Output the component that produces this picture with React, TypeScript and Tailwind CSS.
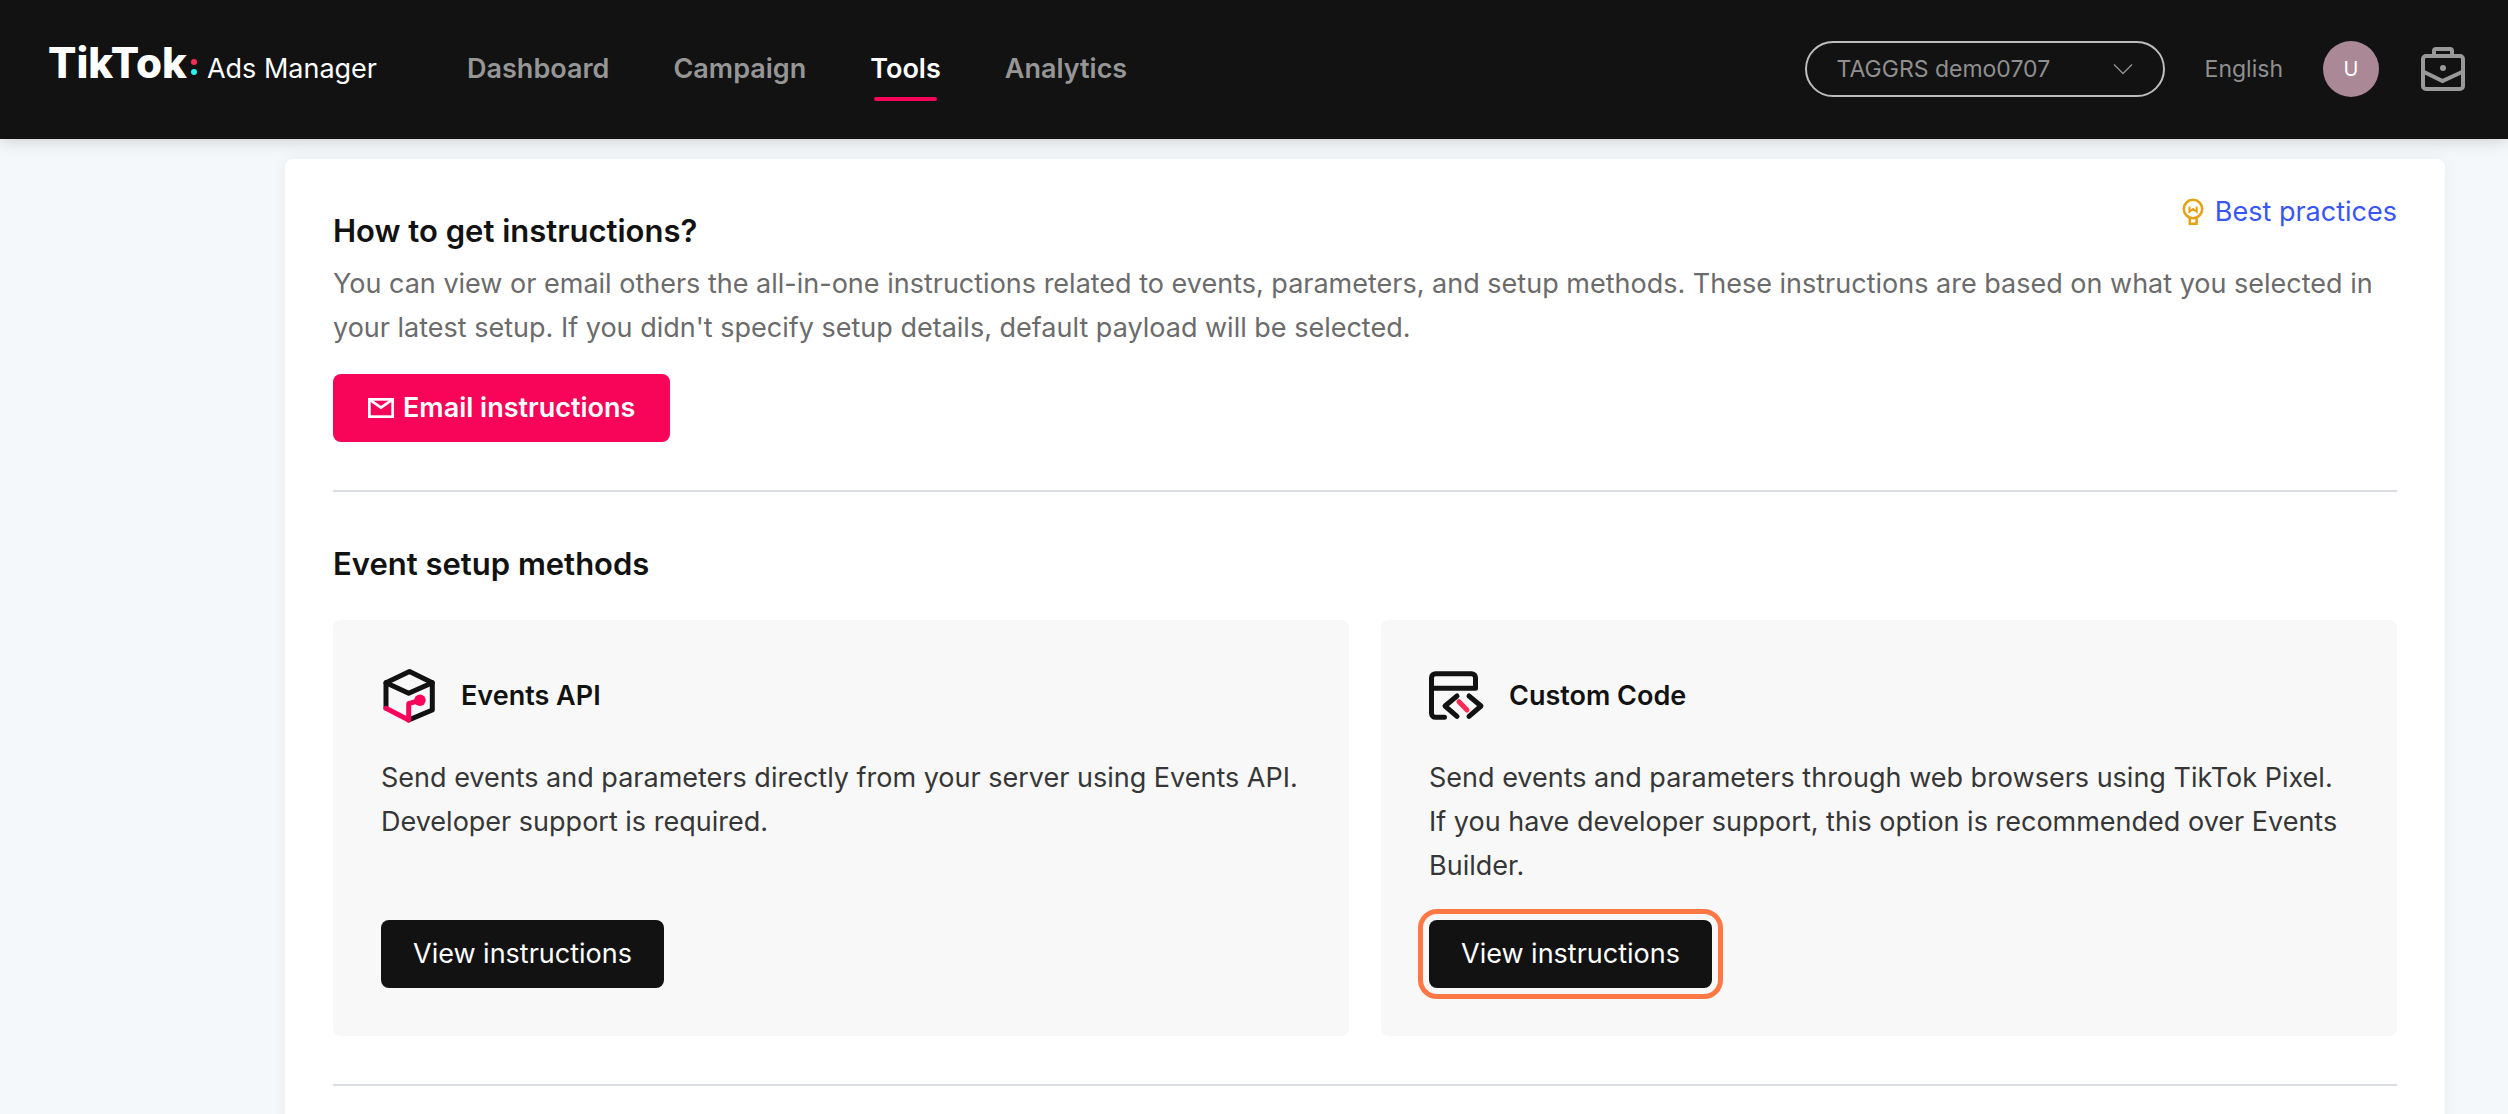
import { useState } from 'react'

const NAV_ITEMS = ['Dashboard', 'Campaign', 'Tools', 'Analytics']

function BriefcaseIcon() {
  return (
    <svg className="size-12" viewBox="0 0 48 48" fill="none" stroke="currentColor" strokeWidth="4" aria-hidden="true">
      <rect x="4" y="11" width="40" height="33" rx="3" />
      <path d="M15 11V6a2 2 0 0 1 2-2h14a2 2 0 0 1 2 2v5" />
      <path d="M5 27l18.500 9L43 27" />
      <circle cx="24" cy="23" r="3" fill="currentColor" stroke="none" />
    </svg>
  )
}

function BulbIcon() {
  return (
    <svg className="h-7 w-[26px]" viewBox="0 0 26 28" fill="none" stroke="#e6a014" strokeWidth="2.500" aria-hidden="true">
      <circle cx="13" cy="11" r="9.200" />
      <path d="M9.800 19.500v6.300h6.800v-6.300" />
      <path d="M9.500 8.500v5.200l3.600-2.700 3.600 2.700V8.500" strokeWidth="2" />
    </svg>
  )
}

function MailIcon() {
  return (
    <svg className="h-5 w-[26px]" viewBox="0 0 26 20" fill="none" stroke="currentColor" strokeWidth="2.700" aria-hidden="true">
      <rect x="1.350" y="1.350" width="23.300" height="17.300" />
      <path d="M2 1.800l11 7.800 11-7.800" />
    </svg>
  )
}

function CubeIcon() {
  return (
    <svg className="size-14" viewBox="0 0 56 56" fill="none" strokeWidth="5" strokeLinecap="round" strokeLinejoin="round" aria-hidden="true">
      <path d="M5 40V14.700L28.500 3.600l22.800 11.100V42L27.700 52" stroke="#121212" />
      <path d="M5 14.700l22.700 10.600 23.600-10.600" stroke="#121212" />
      <path d="M5 40.300L27.700 52V35.700L39 32.300" stroke="#f80459" />
      <circle cx="39" cy="32.300" r="5.700" fill="#f80459" />
    </svg>
  )
}

function CodeIcon() {
  return (
    <svg className="size-14" viewBox="0 0 56 56" fill="none" strokeWidth="5" strokeLinecap="round" strokeLinejoin="round" aria-hidden="true">
      <path d="M15.500 49.300h-9a4 4 0 0 1-4-4V9.700a4 4 0 0 1 4-4h36a4 4 0 0 1 4 4v10.600h-44" stroke="#121212" />
      <path d="M28 28L16 38l12 10.300M40 28l12 10-12 10.300" stroke="#121212" />
      <path d="M30 33.700l8 8.300" stroke="#fe2c55" />
    </svg>
  )
}

const METHODS = [
  {
    title: 'Events API',
    icon: <CubeIcon />,
    description: 'Send events and parameters directly from your server using Events API. Developer support is required.',
    highlighted: false,
  },
  {
    title: 'Custom Code',
    icon: <CodeIcon />,
    description:
      'Send events and parameters through web browsers using TikTok Pixel. If you have developer support, this option is recommended over Events Builder.',
    highlighted: true,
  },
]

function Header() {
  const [active, setActive] = useState('Tools')

  return (
    <header className="relative z-10 flex h-[139px] items-center bg-[#121212] pr-[41px] pb-px pl-12 shadow-[0_2px_16px_rgba(0,0,0,0.16)]">
      <a href="#" className="flex items-baseline pb-3 text-white">
        <span className="text-[42px] leading-[56px] font-extrabold">TikTok</span>
        <span className="mb-4 ml-1 flex flex-col gap-1 self-end">
          <span className="size-1.5 rounded-full bg-[#fe2c55]" />
          <span className="size-1.5 rounded-full bg-[#25f4ee]" />
        </span>
        <span className="ml-2.5">Ads Manager</span>
      </a>

      <nav className="ml-[90px] flex gap-16 leading-[56px] font-semibold">
        {NAV_ITEMS.map((item) => (
          <a
            key={item}
            href="#"
            onClick={() => setActive(item)}
            className={`relative ${item === active ? 'text-white' : 'text-[#969696]'}`}
          >
            {item}
            {item === active && (
              <span className="absolute inset-x-1 -bottom-1 h-1 rounded-sm bg-[#f80459]" />
            )}
          </a>
        ))}
      </nav>

      <div className="ml-auto flex items-center gap-10 text-[23px] text-[#8f8f8f]">
        <div className="relative">
          <select
            aria-label="Account"
            className="h-14 w-[360px] appearance-none rounded-full border-2 border-[#bdbdbd] bg-transparent pl-[30px]"
          >
            <option>TAGGRS demo0707</option>
          </select>
          <svg
            className="pointer-events-none absolute top-[22px] right-8 h-3 w-5"
            viewBox="0 0 20 12"
            fill="none"
            stroke="currentColor"
            strokeWidth="1.500"
            aria-hidden="true"
          >
            <path d="M1 1.500l9 9 9-9" />
          </svg>
        </div>
        <button>English</button>
        <button className="flex size-14 items-center justify-center rounded-full bg-[#aa8895] text-[20px] text-white">U</button>
        <button aria-label="Business center" className="text-[#999999]">
          <BriefcaseIcon />
        </button>
      </div>
    </header>
  )
}

export default function App() {
  return (
    <div className="min-h-screen bg-[#f4f8fb] font-['Inter',sans-serif] text-[27px] leading-[44px] text-[#121212]">
      <Header />
      <main className="pt-5 pr-[63px] pl-[285px]">
        <div className="rounded-lg bg-white px-12 pt-9 pb-12 shadow-[0_0_16px_rgba(0,0,0,0.05)]">
          <section>
            <div className="flex items-start justify-between">
              <h2 className="mt-3 text-[31px] leading-[47px] font-semibold">How to get instructions?</h2>
              <a href="#" className="flex items-center gap-[9px] leading-[34px] text-[#3955f6]">
                <BulbIcon />
                Best practices
              </a>
            </div>
            <p className="mt-2 text-[#6b6b6b]">
              You can view or email others the all-in-one instructions related to events, parameters, and setup methods.
              These instructions are based on what you selected in your latest setup. If you didn't specify setup
              details, default payload will be selected.
            </p>
            <button className="mt-6 flex h-[68px] items-center gap-[9px] rounded-lg bg-[#f80459] px-[35px] font-semibold text-white">
              <MailIcon />
              Email instructions
            </button>
          </section>

          <hr className="my-12 border-t-2 border-[#dadde2]" />

          <section>
            <h2 className="text-[31px] leading-[48px] font-semibold">Event setup methods</h2>
            <div className="mt-8 grid grid-cols-2 gap-8">
              {METHODS.map((method) => (
                <article key={method.title} className="flex flex-col items-start rounded-lg bg-[#f8f8f8] p-12">
                  <div className="flex items-center gap-6">
                    {method.icon}
                    <h3 className="font-semibold">{method.title}</h3>
                  </div>
                  <p className="mt-8 mb-8 text-[#363636]">{method.description}</p>
                  <button
                    className={`mt-auto h-[68px] rounded-lg bg-[#121212] px-8 text-white ${
                      method.highlighted ? 'outline-[5px] outline-offset-[6px] outline-[#ff7744]' : ''
                    }`}
                  >
                    View instructions
                  </button>
                </article>
              ))}
            </div>
          </section>

          <hr className="mt-12 border-t-2 border-[#dadde2]" />
        </div>
      </main>
    </div>
  )
}
